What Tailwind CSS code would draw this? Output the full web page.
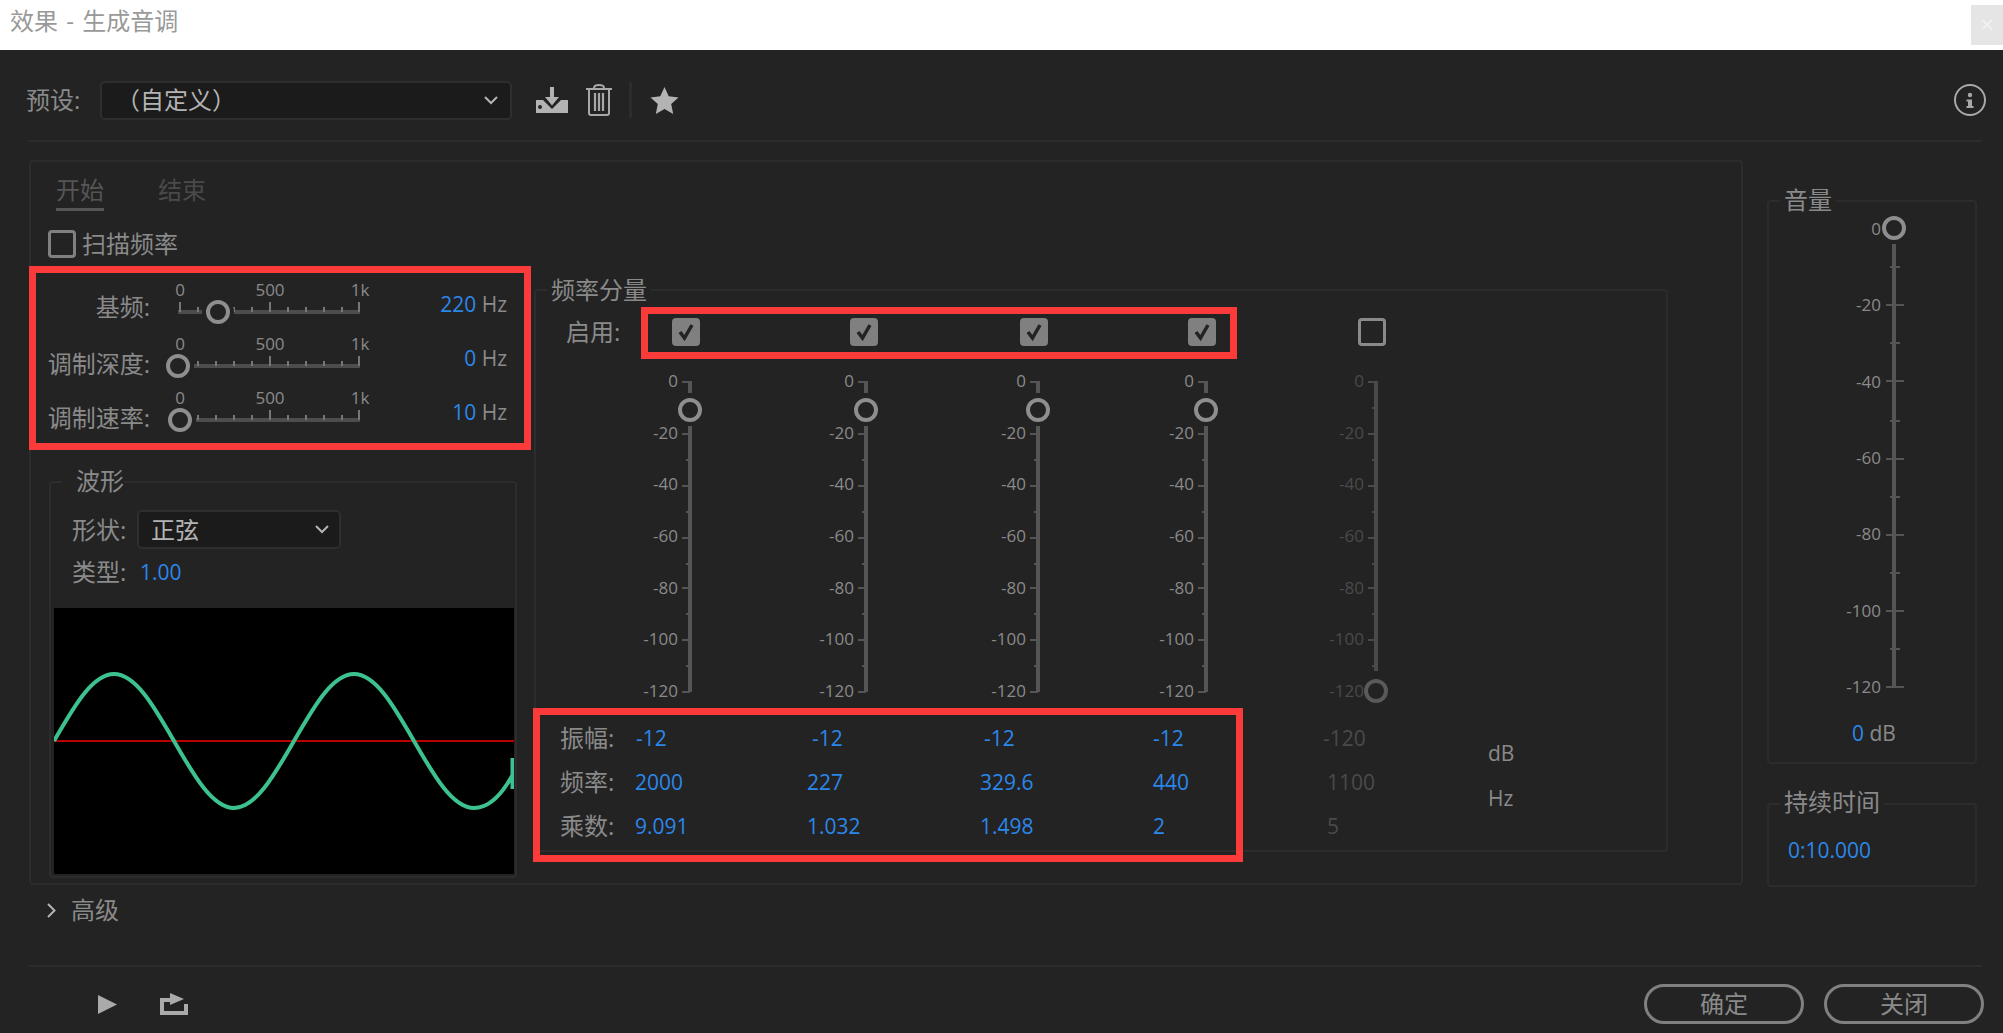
<!DOCTYPE html>
<html lang="zh-CN">

<head>
    <meta charset="UTF-8">
    <title>效果 - 生成音调</title>
    <script src="https://cdn.jsdelivr.net/npm/@tailwindcss/browser@4"></script>
</head>

<body class="relative w-[2003px] h-[1033px] overflow-hidden whitespace-nowrap bg-[#232323] text-[#8a8a8a] text-[24px] leading-[28px] font-['Open_Sans','Noto_Sans_CJK_SC',sans-serif]">
    <!-- shared tick marks of the vertical sliders -->
    <svg class="hidden">
        <symbol id="vticks" viewBox="0 0 24 330">
            <path fill="currentColor" d="M10 10h4v12h-4zM10 55h4v266h-4zM4 10h8v2H4zM4 62h8v2H4zM4 114h8v2H4zM4 166h8v2H4zM4 216h8v2H4zM4 268h8v2H4zM4 320h8v2H4zM8 88h3v2H8zM8 140h3v2H8zM8 192h3v2H8zM8 242h3v2H8zM8 294h3v2H8z" />
        </symbol>
        <symbol id="vticksoff" viewBox="0 0 24 330">
            <path fill="currentColor" d="M10 10h4v290h-4zM4 10h8v2H4zM4 62h8v2H4zM4 114h8v2H4zM4 166h8v2H4zM4 216h8v2H4zM4 268h8v2H4zM8 36h3v2H8zM8 88h3v2H8zM8 140h3v2H8zM8 192h3v2H8zM8 242h3v2H8zM8 294h3v2H8z" />
        </symbol>
    </svg>

    <!-- title bar -->
    <header class="h-[50px] bg-white flex justify-between items-start">
        <div class="pl-[10px] pt-[5px] text-[#999999] leading-[32px] [word-spacing:2px]">效果 - 生成音调</div>
        <div class="w-[32px] h-[40px] mt-[5px] bg-[#e5e5e5] text-[#f2f2f2] text-center leading-[38px]">×</div>
    </header>

    <!-- preset row -->
    <div class="h-[90px] pt-[10px] pl-[26px] pr-[17px] flex items-center">
        <span class="w-[54px]">预设:</span>
        <div class="ml-[20px] w-[412px] h-[39px] pl-[14px] pr-[12px] flex items-center justify-between bg-[#1b1b1b] border-2 border-[#2e2e2e] rounded-[5px] text-[#b4b4b4]">
            <span>（自定义）</span>
            <svg class="w-[14px] h-[9px]" viewBox="0 0 14 9" fill="none" stroke="#b4b4b4" stroke-width="2"><path d="M1 1l6 6 6-6" /></svg>
        </div>
        <svg class="ml-[24px] w-[32px] h-[26px]" viewBox="0 0 32 26" fill="#b3b3b3">
            <path d="M14 0h4v10h5l-7 8.500-7-8.500h5z" />
            <path fill-rule="evenodd" d="M0 13h7l9 9 9-9h7v13H0zM4 18a2 2 0 100 4 2 2 0 000-4z" />
        </svg>
        <svg class="ml-[18px] w-[26px] h-[32px]" viewBox="0 0 26 32" fill="none" stroke="#a8a8a8" stroke-width="2">
            <path d="M8 4c0-4 10-4 10 0" />
            <path d="M0 5h26" />
            <path d="M3 5v24c0 1 1 2 2 2h16c1 0 2-1 2-2V5" />
            <path stroke-width="2.200" d="M9 9v18M13 9v18M17 9v18" />
        </svg>
        <div class="ml-[17px] w-[3px] h-[36px] bg-[#2c2c2c]"></div>
        <svg class="ml-[18px] w-[29px] h-[27px]" viewBox="0 0 28 27" fill="#b3b3b3"><path d="M14 0l4.200 9.300L28 10.400l-7.300 6.700L22.700 27 14 21.900 5.300 27l2-9.900L0 10.400l9.800-1.100z" /></svg>
        <svg class="ml-auto w-[32px] h-[32px]" viewBox="0 0 32 32" fill="#a8a8a8">
            <circle cx="16" cy="16" r="15" fill="none" stroke="#a8a8a8" stroke-width="2" />
            <circle cx="16" cy="11" r="2.200" />
            <path d="M12.500 15.500H18V22h1.500v2h-7v-2H14v-4.500h-1.500z" />
        </svg>
    </div>
    <div class="ml-[28px] w-[1954px] h-[2px] bg-[#2c2c2c]"></div>

    <main class="flex items-start ml-[29px] mt-[18px]">
        <!-- start / end panel -->
        <section class="w-[1714px] h-[725px] border-2 border-[#2c2c2c] rounded-[4px] flex items-start">
            <div class="w-[503px] shrink-0">
                <div class="flex ml-[25px] pt-[14px] text-[#555555]">
                    <div class="pb-[4px] border-b-[3px] border-[#555555]">开始</div>
                    <div class="ml-[54px] text-[#4a4a4a]">结束</div>
                </div>
                <label class="flex items-center ml-[17px] mt-[19px] h-[28px]">
                    <span class="w-[28px] h-[28px] border-[3px] border-[#808080] rounded-[4px]"></span>
                    <span class="ml-[6px]">扫描频率</span>
                </label>

                <!-- frequency sliders -->
                <div class="ml-[15px] mt-[19px]">
                    <div class="flex h-[54px]">
                        <div class="w-[104px] mt-[15px] h-[30px] leading-[30px] text-right">基频:</div>
                        <div class="relative ml-[28px] w-[182px] h-[54px] text-[17px]">
                            <div class="absolute left-[-18px] top-[3px] w-[220px] flex justify-between leading-[20px]"><span class="w-[40px] text-center">0</span><span class="w-[40px] text-center">500</span><span class="w-[40px] text-center">1k</span></div>
                            <div class="absolute left-0 top-[33px] w-[182px] h-[4px] bg-[#4d4d4d]"></div>
                            <svg class="absolute left-0 top-[25px] w-[182px] h-[12px]" viewBox="0 0 182 12" fill="#777777"><path d="M1 0h2v10H1zM91 0h2v10h-2zM180 0h2v10h-2zM19 5h2v5h-2zM37 5h2v5h-2zM55 5h2v5h-2zM73 5h2v5h-2zM109 5h2v5h-2zM127 5h2v5h-2zM145 5h2v5h-2zM163 5h2v5h-2z" /></svg>
                            <div class="absolute left-[28px] top-[23px] w-[24px] h-[24px] rounded-full border-[4px] border-[#8e8e8e] bg-[#232323] shadow-[0_0_0_4px_#232323]"></div>
                        </div>
                        <div class="w-[147px] mt-[12px] h-[30px] leading-[30px] text-right text-[21px]"><span class="text-[#2b87ea]">220</span> Hz</div>
                    </div>
                    <div class="flex h-[54px]">
                        <div class="w-[104px] mt-[18px] h-[30px] leading-[30px] text-right">调制深度:</div>
                        <div class="relative ml-[28px] w-[182px] h-[54px] text-[17px]">
                            <div class="absolute left-[-18px] top-[3px] w-[220px] flex justify-between leading-[20px]"><span class="w-[40px] text-center">0</span><span class="w-[40px] text-center">500</span><span class="w-[40px] text-center">1k</span></div>
                            <div class="absolute left-0 top-[33px] w-[182px] h-[4px] bg-[#4d4d4d]"></div>
                            <svg class="absolute left-0 top-[25px] w-[182px] h-[12px]" viewBox="0 0 182 12" fill="#777777"><path d="M1 0h2v10H1zM91 0h2v10h-2zM180 0h2v10h-2zM19 5h2v5h-2zM37 5h2v5h-2zM55 5h2v5h-2zM73 5h2v5h-2zM109 5h2v5h-2zM127 5h2v5h-2zM145 5h2v5h-2zM163 5h2v5h-2z" /></svg>
                            <div class="absolute left-[-12px] top-[23px] w-[24px] h-[24px] rounded-full border-[4px] border-[#8e8e8e] bg-[#232323] shadow-[0_0_0_4px_#232323]"></div>
                        </div>
                        <div class="w-[147px] mt-[12px] h-[30px] leading-[30px] text-right text-[21px]"><span class="text-[#2b87ea]">0</span> Hz</div>
                    </div>
                    <div class="flex h-[54px]">
                        <div class="w-[104px] mt-[18px] h-[30px] leading-[30px] text-right">调制速率:</div>
                        <div class="relative ml-[28px] w-[182px] h-[54px] text-[17px]">
                            <div class="absolute left-[-18px] top-[3px] w-[220px] flex justify-between leading-[20px]"><span class="w-[40px] text-center">0</span><span class="w-[40px] text-center">500</span><span class="w-[40px] text-center">1k</span></div>
                            <div class="absolute left-0 top-[33px] w-[182px] h-[4px] bg-[#4d4d4d]"></div>
                            <svg class="absolute left-0 top-[25px] w-[182px] h-[12px]" viewBox="0 0 182 12" fill="#777777"><path d="M1 0h2v10H1zM91 0h2v10h-2zM180 0h2v10h-2zM19 5h2v5h-2zM37 5h2v5h-2zM55 5h2v5h-2zM73 5h2v5h-2zM109 5h2v5h-2zM127 5h2v5h-2zM145 5h2v5h-2zM163 5h2v5h-2z" /></svg>
                            <div class="absolute left-[-10px] top-[23px] w-[24px] h-[24px] rounded-full border-[4px] border-[#8e8e8e] bg-[#232323] shadow-[0_0_0_4px_#232323]"></div>
                        </div>
                        <div class="w-[147px] mt-[12px] h-[30px] leading-[30px] text-right text-[21px]"><span class="text-[#2b87ea]">10</span> Hz</div>
                    </div>
                </div>

                <!-- waveform -->
                <fieldset class="ml-[18px] mt-[29px] w-[468px] h-[410px] border-2 border-[#2c2c2c] rounded-[4px]">
                    <legend class="ml-[11px] pl-[14px] -translate-y-[1px]">波形</legend>
                    <div class="flex items-center ml-[21px] mt-[14px]">
                        <span class="w-[53px]">形状:</span>
                        <div class="ml-[12px] w-[204px] h-[39px] pl-[12px] pr-[10px] flex items-center justify-between bg-[#1b1b1b] border-2 border-[#2e2e2e] rounded-[5px] text-[#b4b4b4]">
                            <span>正弦</span>
                            <svg class="w-[14px] h-[9px]" viewBox="0 0 14 9" fill="none" stroke="#b4b4b4" stroke-width="2"><path d="M1 1l6 6 6-6" /></svg>
                        </div>
                    </div>
                    <div class="flex items-center ml-[21px] mt-[9px]">
                        <span class="w-[53px]">类型:</span>
                        <span class="ml-[15px] text-[21px] text-[#2b87ea]">1.00</span>
                    </div>
                    <svg class="block ml-[3px] mt-[22px] w-[460px] h-[266px] bg-black" viewBox="0 0 460 266" fill="none">
                        <path d="M0 133H460" stroke="#b80000" stroke-width="2" />
                        <path stroke="#3dc28f" stroke-width="4" d="M0 133C19.600 99 38.300 66 60 66C81.700 66 100.400 99 120 133C139.600 167 158.300 200 180 200C201.700 200 220.400 167 240 133C259.600 99 278.300 66 300 66C321.700 66 340.400 99 360 133C379.600 167 398.300 200 420 200C436 200 448 186 458 168M458.500 150V181" />
                    </svg>
                </fieldset>
            </div>

            <!-- frequency components -->
            <fieldset class="mt-[114px] w-[1134px] h-[576px] border-2 border-[#2c2c2c] rounded-[4px]">
                <legend class="ml-[11px] px-[4px]">频率分量</legend>
                <div class="flex items-center mt-[14px] h-[28px]">
                    <span class="pl-[30px] w-[136px]">启用:</span>
                    <div class="grid grid-cols-[178px_170px_168px_170px_28px]">
                        <span class="w-[28px] h-[28px] bg-[#808080] rounded-[4px] flex items-center justify-center"><svg class="w-[18px] h-[18px]" viewBox="0 0 18 18" fill="none" stroke="#232323" stroke-width="3.500"><path d="M3 9l4.500 6L15 2" /></svg></span>
                        <span class="w-[28px] h-[28px] bg-[#808080] rounded-[4px] flex items-center justify-center"><svg class="w-[18px] h-[18px]" viewBox="0 0 18 18" fill="none" stroke="#232323" stroke-width="3.500"><path d="M3 9l4.500 6L15 2" /></svg></span>
                        <span class="w-[28px] h-[28px] bg-[#808080] rounded-[4px] flex items-center justify-center"><svg class="w-[18px] h-[18px]" viewBox="0 0 18 18" fill="none" stroke="#232323" stroke-width="3.500"><path d="M3 9l4.500 6L15 2" /></svg></span>
                        <span class="w-[28px] h-[28px] bg-[#808080] rounded-[4px] flex items-center justify-center"><svg class="w-[18px] h-[18px]" viewBox="0 0 18 18" fill="none" stroke="#232323" stroke-width="3.500"><path d="M3 9l4.500 6L15 2" /></svg></span>
                        <span class="w-[28px] h-[28px] border-[3px] border-[#8a8a8a] rounded-[4px]"></span>
                    </div>
                </div>

                <div class="ml-[102px] mt-[25px] grid grid-cols-[176px_172px_168px_170px_64px] text-[17px] leading-[20px]">
                    <div class="flex h-[330px]">
                        <div class="w-[40px] flex flex-col justify-between items-end"><span>0</span><span>-20</span><span>-40</span><span>-60</span><span>-80</span><span>-100</span><span>-120</span></div>
                        <div class="relative w-[24px] h-[330px] text-[#555555]"><svg class="w-[24px] h-[330px]"><use href="#vticks" /></svg><div class="absolute left-0 top-[27px] w-[24px] h-[24px] rounded-full border-[4px] border-[#8e8e8e]"></div></div>
                    </div>
                    <div class="flex h-[330px]">
                        <div class="w-[40px] flex flex-col justify-between items-end"><span>0</span><span>-20</span><span>-40</span><span>-60</span><span>-80</span><span>-100</span><span>-120</span></div>
                        <div class="relative w-[24px] h-[330px] text-[#555555]"><svg class="w-[24px] h-[330px]"><use href="#vticks" /></svg><div class="absolute left-0 top-[27px] w-[24px] h-[24px] rounded-full border-[4px] border-[#8e8e8e]"></div></div>
                    </div>
                    <div class="flex h-[330px]">
                        <div class="w-[40px] flex flex-col justify-between items-end"><span>0</span><span>-20</span><span>-40</span><span>-60</span><span>-80</span><span>-100</span><span>-120</span></div>
                        <div class="relative w-[24px] h-[330px] text-[#555555]"><svg class="w-[24px] h-[330px]"><use href="#vticks" /></svg><div class="absolute left-0 top-[27px] w-[24px] h-[24px] rounded-full border-[4px] border-[#8e8e8e]"></div></div>
                    </div>
                    <div class="flex h-[330px]">
                        <div class="w-[40px] flex flex-col justify-between items-end"><span>0</span><span>-20</span><span>-40</span><span>-60</span><span>-80</span><span>-100</span><span>-120</span></div>
                        <div class="relative w-[24px] h-[330px] text-[#555555]"><svg class="w-[24px] h-[330px]"><use href="#vticks" /></svg><div class="absolute left-0 top-[27px] w-[24px] h-[24px] rounded-full border-[4px] border-[#8e8e8e]"></div></div>
                    </div>
                    <div class="flex h-[330px] text-[#4a4a4a]">
                        <div class="w-[40px] flex flex-col justify-between items-end"><span>0</span><span>-20</span><span>-40</span><span>-60</span><span>-80</span><span>-100</span><span>-120</span></div>
                        <div class="relative w-[24px] h-[330px] text-[#4a4a4a]"><svg class="w-[24px] h-[330px]"><use href="#vticksoff" /></svg><div class="absolute left-0 top-[308px] w-[24px] h-[24px] rounded-full border-[4px] border-[#5a5a5a] bg-[#232323]"></div></div>
                    </div>
                </div>

                <div class="flex mt-[15px]">
                    <div class="w-[952px] pl-[24px] text-[21px]">
                        <div class="flex h-[44px] items-center">
                            <span class="w-[76px] text-[24px]">振幅:</span>
                            <div class="grid grid-cols-[176px_172px_169px_170px_64px] text-[#2b87ea]"><span>-12</span><span>-12</span><span>-12</span><span>-12</span><span class="text-[#4a4a4a]">-120</span></div>
                        </div>
                        <div class="flex h-[44px] items-center">
                            <span class="w-[75px] text-[24px]">频率:</span>
                            <div class="grid grid-cols-[172px_173px_173px_174px_64px] text-[#2b87ea]"><span>2000</span><span>227</span><span>329.6</span><span>440</span><span class="text-[#4a4a4a]">1100</span></div>
                        </div>
                        <div class="flex h-[44px] items-center">
                            <span class="w-[75px] text-[24px]">乘数:</span>
                            <div class="grid grid-cols-[172px_173px_173px_174px_64px] text-[#2b87ea]"><span>9.091</span><span>1.032</span><span>1.498</span><span>2</span><span class="text-[#4a4a4a]">5</span></div>
                        </div>
                    </div>
                    <div class="pt-[23px] flex flex-col gap-[17px] text-[21px]"><span>dB</span><span>Hz</span></div>
                </div>
            </fieldset>
        </section>

        <!-- volume and duration -->
        <aside class="ml-[24px] w-[210px] mt-[27px]">
            <fieldset class="h-[577px] border-2 border-[#2c2c2c] rounded-[4px]">
                <legend class="ml-[11px] px-[4px] -translate-y-[1px]">音量</legend>
                <div class="flex mt-[4px] text-[17px] leading-[20px]">
                    <div class="w-[112px] h-[478px] flex flex-col justify-between items-end"><span>0</span><span>-20</span><span>-40</span><span>-60</span><span>-80</span><span>-100</span><span>-120</span></div>
                    <div class="relative ml-[3px] w-[24px] h-[478px]">
                        <svg class="w-[24px] h-[478px]" viewBox="0 0 24 478" fill="#555555"><path d="M8 25h4v443H8zM2 85h18v2H2zM2 161h18v2H2zM2 239h18v2H2zM2 315h18v2H2zM2 391h18v2H2zM2 467h18v2H2zM6 47h10v2H6zM6 123h10v2H6zM6 201h10v2H6zM6 277h10v2H6zM6 353h10v2H6zM6 429h10v2H6z" /></svg>
                        <div class="absolute left-[-2px] top-[-3px] w-[24px] h-[24px] rounded-full border-[4px] border-[#8e8e8e]"></div>
                    </div>
                </div>
                <div class="ml-[83px] mt-[22px] text-[21px]"><span class="text-[#2b87ea]">0</span> dB</div>
            </fieldset>
            <fieldset class="mt-[26px] h-[97px] border-2 border-[#2c2c2c] rounded-[4px]">
                <legend class="ml-[11px] px-[4px] -translate-y-[2px]">持续时间</legend>
                <div class="ml-[19px] mt-[18px] text-[21px] text-[#2b87ea]">0:10.000</div>
            </fieldset>
        </aside>
    </main>

    <!-- advanced -->
    <div class="flex items-center ml-[47px] mt-[9px]">
        <svg class="w-[9px] h-[15px]" viewBox="0 0 9 15" fill="none" stroke="#b4b4b4" stroke-width="2"><path d="M1 1l6.500 6.500L1 14" /></svg>
        <span class="ml-[15px]">高级</span>
    </div>
    <div class="ml-[28px] mt-[41px] w-[1954px] h-[2px] bg-[#2c2c2c]"></div>

    <!-- transport and dialog buttons -->
    <footer class="flex items-center mt-[17px] h-[40px] pl-[98px] pr-[19px]">
        <svg class="w-[19px] h-[19px]" viewBox="0 0 19 19" fill="#aaaaaa"><path d="M0 0l19 9.500L0 19z" /></svg>
        <svg class="ml-[43px] w-[28px] h-[22px]" viewBox="0 0 28 22" fill="#aaaaaa"><path d="M0 5h10v4H4v9h20v-7h4v11H0zM10 0l14 6-14 6z" /></svg>
        <div class="ml-auto w-[160px] h-[40px] border-[3px] border-[#808080] rounded-full text-center leading-[34px]">确定</div>
        <div class="ml-[20px] w-[160px] h-[40px] border-[3px] border-[#808080] rounded-full text-center leading-[34px]">关闭</div>
    </footer>

    <!-- red callouts drawn over the dialog -->
    <div class="absolute left-[29px] top-[266px] w-[502px] h-[184px] border-[7px] border-[#fb3a3a]"></div>
    <div class="absolute left-[641px] top-[307px] w-[596px] h-[52px] border-[7px] border-[#fb3a3a]"></div>
    <div class="absolute left-[533px] top-[708px] w-[710px] h-[154px] border-[7px] border-[#fb3a3a]"></div>
</body>

</html>
